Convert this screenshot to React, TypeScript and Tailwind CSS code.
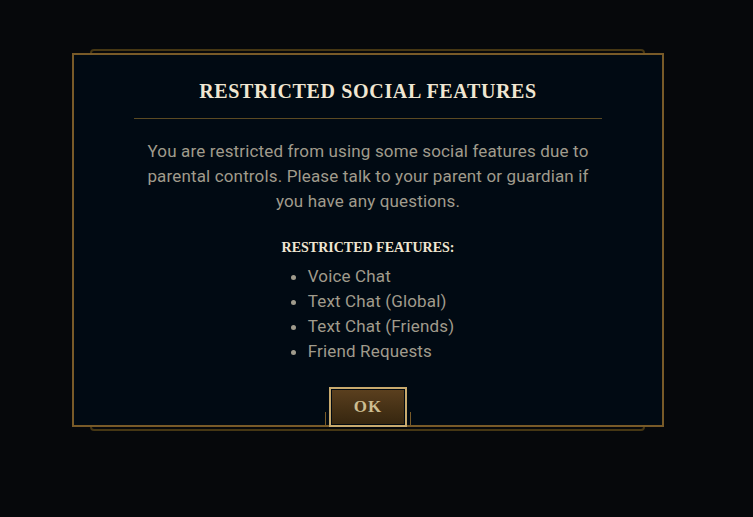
import React from "react";

const features = [
  "Voice Chat",
  "Text Chat (Global)",
  "Text Chat (Friends)",
  "Friend Requests",
];

const serif = "font-['Liberation_Serif',serif]";
const sans = "font-['Roboto',sans-serif]";

export default function App() {
  return (
    <div className="w-[753px] h-[517px] bg-[#06080b] pl-[72px] pt-[53px] overflow-hidden">
      <div className="relative w-[592px] h-[374px]">
        {/* thin back frame peeking above and below */}
        <div className="absolute left-[18px] right-[19px] -top-[4px] -bottom-[4px] border-2 border-[#463714] rounded-[4px]" />

        <div className="relative h-full border-2 border-[#785a28] bg-[#010a13] flex flex-col items-center">
          <h1 className={`${serif} mt-[21px] text-[20px] leading-[30px] font-bold tracking-[0.65px] text-[#f0e6d2]`}>
            RESTRICTED SOCIAL FEATURES
          </h1>
          <div className="mt-[12px] w-[468px] h-px bg-[#5b4a23]" />

          <p className={`${sans} mt-[20px] w-[450px] text-center text-[17px] leading-[25px] tracking-[0.15px] text-[#a09b8c]`}>
            You are restricted from using some social features due to parental controls. Please talk to your parent or
            guardian if you have any questions.
          </p>

          <h2 className={`${serif} mt-[24px] text-[14px] leading-[20px] font-bold text-[#f0e6d2]`}>
            RESTRICTED FEATURES:
          </h2>

          <ul className={`${sans} mt-[6px] pl-[26px] list-disc text-[17px] leading-[25px] tracking-[0.15px] text-[#a09b8c]`}>
            {features.map((f) => (
              <li key={f}>{f}</li>
            ))}
          </ul>

          <div className="mt-auto mb-[-2px] flex items-end">
            <div className="w-px h-[15px] bg-[#785a28] mr-[3px]" />
            <button className="w-[78px] h-[40px] border-2 border-[#c8aa6e] p-px bg-[#010a13]">
              <span
                className={`${serif} flex h-full items-center justify-center bg-gradient-to-b from-[#5a3f1e] to-[#36260f] text-[17px] font-bold tracking-[1px] text-[#cdbe91]`}
              >
                OK
              </span>
            </button>
            <div className="w-px h-[15px] bg-[#785a28] ml-[3px]" />
          </div>
        </div>
      </div>
    </div>
  );
}
